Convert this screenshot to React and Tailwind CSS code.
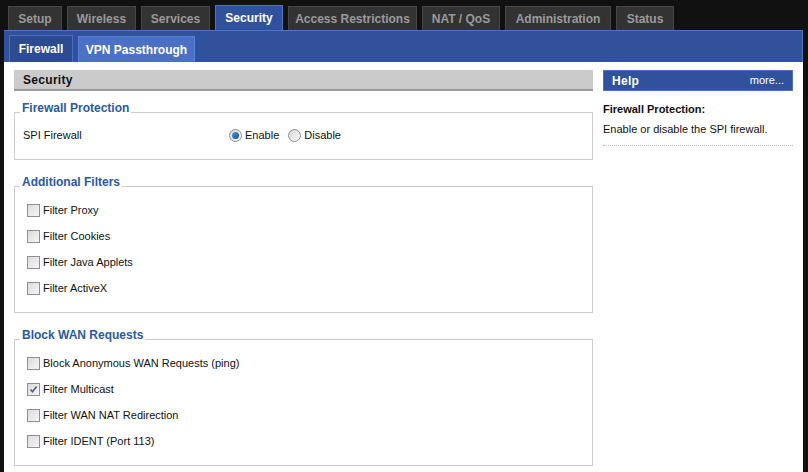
import { useState } from "react";

const TABS = [
    { name: "Setup", w: "w-[54px]" },
    { name: "Wireless", w: "w-[69px]" },
    { name: "Services", w: "w-[69px]" },
    { name: "Security", w: "w-[68px]", active: true },
    { name: "Access Restrictions", w: "w-[129px]" },
    { name: "NAT / QoS", w: "w-[78px]" },
    { name: "Administration", w: "w-[106px]" },
    { name: "Status", w: "w-[58px]" },
];

const Checkbox = ({ checked, onChange }) => (
    <button
        onClick={onChange}
        className="w-[13px] h-[13px] border border-[#8f8f8f] bg-gradient-to-br from-[#dcdcdc] to-[#f6f6f6] flex items-center justify-center flex-shrink-0 p-0"
    >
        {checked && (
            <svg width="9" height="9" viewBox="0 0 9 9">
                <path d="M1.5 4.5 L3.5 6.8 L7.6 1.6" stroke="#4a5f8c" strokeWidth="1.6" fill="none" />
            </svg>
        )}
    </button>
);

const Radio = ({ checked, onChange }) => (
    <button
        onClick={onChange}
        className="w-[13px] h-[13px] rounded-full border border-[#8f8f8f] bg-gradient-to-br from-[#d8d8d8] to-[#f8f8f8] flex items-center justify-center flex-shrink-0 p-0"
    >
        {checked && <span className="w-[7px] h-[7px] rounded-full bg-gradient-to-br from-[#4aa0e0] to-[#0b4f8a]" />}
    </button>
);

// legend gets extra bottom padding so the border runs near the text baseline
const Section = ({ title, children, className }) => (
    <fieldset className={"border border-[#cccccc] px-[8px] " + (className || "")}>
        <legend className="-ml-[3px] px-[2px] pb-[8px] text-[12px] font-bold text-[#2b58a8] leading-[14px]">{title}</legend>
        {children}
    </fieldset>
);

export default function App() {
    const [spi, setSpi] = useState(true);
    const [checks, setChecks] = useState({
        proxy: false,
        cookies: false,
        java: false,
        activex: false,
        anon: false,
        multicast: true,
        nat: false,
        ident: false,
    });
    const toggle = (k) => setChecks((p) => ({ ...p, [k]: !p[k] }));

    const Row = ({ k, label }) => (
        <label className="flex items-center gap-[3px] h-[26px] pl-[4px] cursor-pointer">
            <Checkbox checked={checks[k]} onChange={() => toggle(k)} />
            <span>{label}</span>
        </label>
    );

    return (
        <div className="w-[808px] h-[472px] bg-[#111111] overflow-hidden text-[11px] text-[#111]" style={{ fontFamily: '"Liberation Sans", Arial, sans-serif' }}>
            {/* main tabs */}
            <div className="flex items-end gap-[5px] pl-[8px] h-[30px] pt-[5px]">
                {TABS.map((t) =>
                    t.active ? (
                        <div key={t.name} className={t.w + " h-[25px] bg-[#30529c] border border-b-0 border-[#4c73cc] text-white font-bold text-[12px] flex items-center justify-center"}>
                            {t.name}
                        </div>
                    ) : (
                        <div key={t.name} className={t.w + " h-[24px] bg-[#333333] border border-b-0 border-[#474747] text-[#9a9a9a] font-bold text-[12px] flex items-center justify-center"}>
                            {t.name}
                        </div>
                    )
                )}
            </div>

            <div className="ml-[4px] w-[799px]">
                {/* sub tabs */}
                <div className="h-[32px] bg-[#30529c] border-t border-r border-[#4c73cc] flex items-end gap-[5px] pl-[5px]">
                    <div className="w-[64px] h-[27px] bg-[#2c4b90] border border-b-0 border-[#4a6fc4] text-white font-bold text-[12px] flex items-center justify-center">Firewall</div>
                    <div className="w-[117px] h-[26px] bg-[#4a70c8] border border-b-0 border-[#5b80d4] text-white font-bold text-[12px] flex items-center justify-center">VPN Passthrough</div>
                </div>

                {/* content */}
                <div className="bg-white h-[410px] flex gap-[10px] pl-[10px] pt-[8px]">
                    <div className="w-[579px] flex flex-col">
                        <div className="h-[21px] bg-[#cbcbcb] border-b-2 border-[#9a9a9a] font-bold text-[12px] pl-[9px] flex items-center tracking-[0.3px]">Security</div>

                        <Section title="Firewall Protection" className="mt-[10px] h-[59px]">
                            <div className="flex items-center h-[24px]">
                                <span className="w-[206px]">SPI Firewall</span>
                                <label className="flex items-center gap-[3px] cursor-pointer">
                                    <Radio checked={spi} onChange={() => setSpi(true)} />
                                    <span>Enable</span>
                                </label>
                                <label className="flex items-center gap-[3px] ml-[9px] cursor-pointer">
                                    <Radio checked={!spi} onChange={() => setSpi(false)} />
                                    <span>Disable</span>
                                </label>
                            </div>
                        </Section>

                        <Section title="Additional Filters" className="mt-[15px] h-[138px]">
                            <Row k="proxy" label="Filter Proxy" />
                            <Row k="cookies" label="Filter Cookies" />
                            <Row k="java" label="Filter Java Applets" />
                            <Row k="activex" label="Filter ActiveX" />
                        </Section>

                        <Section title="Block WAN Requests" className="mt-[15px] h-[138px]">
                            <Row k="anon" label="Block Anonymous WAN Requests (ping)" />
                            <Row k="multicast" label="Filter Multicast" />
                            <Row k="nat" label="Filter WAN NAT Redirection" />
                            <Row k="ident" label="Filter IDENT (Port 113)" />
                        </Section>
                    </div>

                    {/* help */}
                    <div className="w-[190px]">
                        <div className="h-[21px] bg-[#30529c] border border-[#4c73cc] flex items-center justify-between px-[8px] text-white">
                            <span className="font-bold text-[12px] tracking-[0.3px]">Help</span>
                            <span className="text-[11px]">more...</span>
                        </div>
                        <div className="pt-[10px] font-bold">Firewall Protection:</div>
                        <div className="pt-[3px]">Enable or disable the SPI firewall.</div>
                        <div className="mt-[8px] border-b border-dotted border-[#bbbbbb]" />
                    </div>
                </div>
            </div>
        </div>
    );
}
